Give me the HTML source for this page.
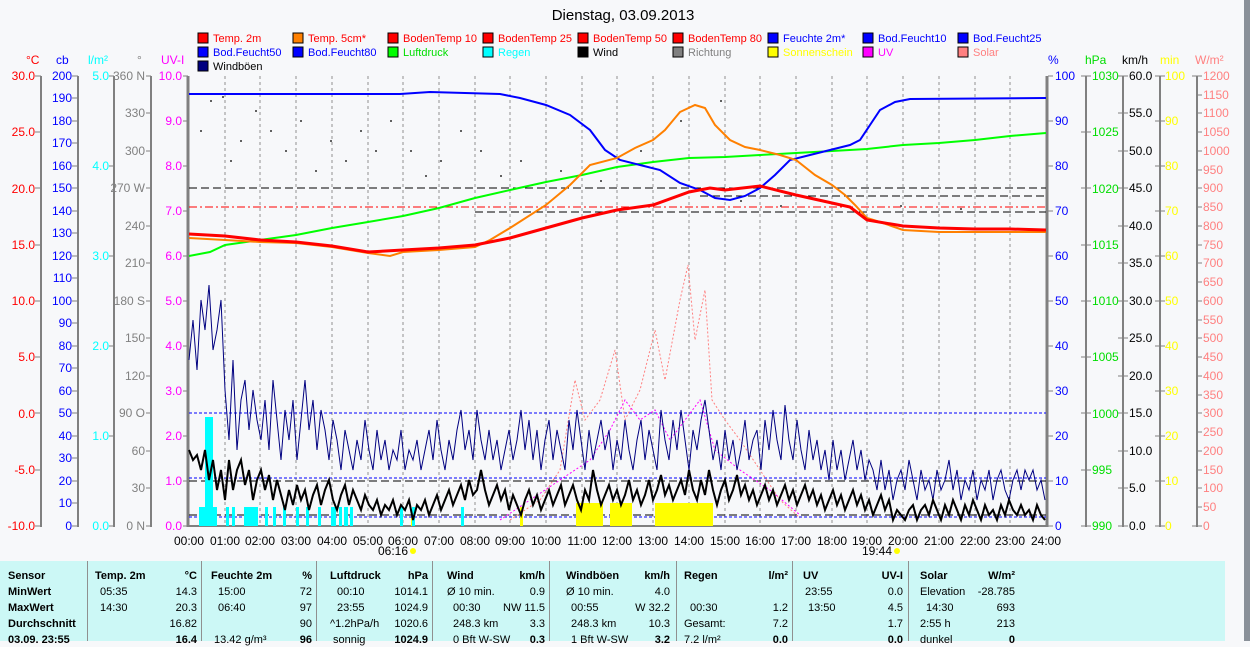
<!DOCTYPE html>
<html><head><meta charset="utf-8"><style>
body{margin:0;width:1250px;height:641px;overflow:hidden;background:#f7f8fa;font-family:"Liberation Sans",sans-serif;position:relative}
svg{position:absolute;left:0;top:0}
svg text{font-family:"Liberation Sans",sans-serif;font-size:12px}
svg g.lg text{font-size:11px}
#tbl{position:absolute;left:0;top:561px;width:1225px;height:80px;background:#ccf8f6;font-size:11px}
#tbl div{position:absolute;white-space:nowrap;line-height:14px}
.r{text-align:right}
.b{font-weight:bold}
.sep{position:absolute;top:0;width:1px;height:80px;background:#909090}
</style></head><body>
<svg width="1250" height="561" viewBox="0 0 1250 561">
<text x="623" y="20" text-anchor="middle" style="font-size:15px" fill="#000">Dienstag, 03.09.2013</text>
<g class="lg">
<rect x="198" y="33" width="10" height="10" fill="#f00" stroke="#000"/><text x="213" y="42" fill="#f00">Temp. 2m</text>
<rect x="293" y="33" width="10" height="10" fill="#ff8000" stroke="#000"/><text x="308" y="42" fill="#f00">Temp. 5cm*</text>
<rect x="388" y="33" width="10" height="10" fill="#f00" stroke="#000"/><text x="403" y="42" fill="#f00">BodenTemp 10</text>
<rect x="483" y="33" width="10" height="10" fill="#f00" stroke="#000"/><text x="498" y="42" fill="#f00">BodenTemp 25</text>
<rect x="578" y="33" width="10" height="10" fill="#f00" stroke="#000"/><text x="593" y="42" fill="#f00">BodenTemp 50</text>
<rect x="673" y="33" width="10" height="10" fill="#f00" stroke="#000"/><text x="688" y="42" fill="#f00">BodenTemp 80</text>
<rect x="768" y="33" width="10" height="10" fill="#00f" stroke="#000"/><text x="783" y="42" fill="#00f">Feuchte 2m*</text>
<rect x="863" y="33" width="10" height="10" fill="#00f" stroke="#000"/><text x="878" y="42" fill="#00f">Bod.Feucht10</text>
<rect x="958" y="33" width="10" height="10" fill="#00f" stroke="#000"/><text x="973" y="42" fill="#00f">Bod.Feucht25</text>
<rect x="198" y="47" width="10" height="10" fill="#00f" stroke="#000"/><text x="213" y="56" fill="#00f">Bod.Feucht50</text>
<rect x="293" y="47" width="10" height="10" fill="#00f" stroke="#000"/><text x="308" y="56" fill="#00f">Bod.Feucht80</text>
<rect x="388" y="47" width="10" height="10" fill="#0f0" stroke="#000"/><text x="403" y="56" fill="#0d0">Luftdruck</text>
<rect x="483" y="47" width="10" height="10" fill="#0ff" stroke="#000"/><text x="498" y="56" fill="#0ff">Regen</text>
<rect x="578" y="47" width="10" height="10" fill="#000" stroke="#000"/><text x="593" y="56" fill="#000">Wind</text>
<rect x="673" y="47" width="10" height="10" fill="#808080" stroke="#000"/><text x="688" y="56" fill="#808080">Richtung</text>
<rect x="768" y="47" width="10" height="10" fill="#ff0" stroke="#000"/><text x="783" y="56" fill="#ff0">Sonnenschein</text>
<rect x="863" y="47" width="10" height="10" fill="#f0f" stroke="#000"/><text x="878" y="56" fill="#f0f">UV</text>
<rect x="958" y="47" width="10" height="10" fill="#ff8080" stroke="#000"/><text x="973" y="56" fill="#ff8080">Solar</text>
<rect x="198" y="61" width="10" height="10" fill="#000080" stroke="#000"/><text x="213" y="70" fill="#000">Windböen</text>
</g>
<text x="26" y="64" fill="#f00">°C</text><text x="56" y="64" fill="#00f">cb</text><text x="88" y="64" fill="#0ff">l/m²</text><text x="137" y="64" fill="#808080">°</text><text x="161" y="64" fill="#f0f">UV-I</text>
<text x="1048" y="64" fill="#00f">%</text><text x="1085" y="64" fill="#0d0">hPa</text><text x="1122" y="64" fill="#000">km/h</text><text x="1160" y="64" fill="#ff0">min</text><text x="1195" y="64" fill="#ff8080">W/m²</text>
<g stroke="#808080" stroke-width="2"><line x1="41" y1="76" x2="41" y2="527"/><line x1="78" y1="76" x2="78" y2="527"/><line x1="114" y1="76" x2="114" y2="527"/><line x1="151" y1="76" x2="151" y2="527"/><line x1="1086" y1="76" x2="1086" y2="527"/><line x1="1123" y1="76" x2="1123" y2="527"/><line x1="1160" y1="76" x2="1160" y2="527"/><line x1="1197" y1="76" x2="1197" y2="527"/>
<line x1="188" y1="76" x2="188" y2="527" stroke-width="3"/><line x1="1047" y1="76" x2="1047" y2="527" stroke-width="3"/><line x1="187" y1="526" x2="1048" y2="526"/></g>
<rect x="1244" y="0" width="6" height="561" fill="#8a9199"/>
<g text-anchor="end" fill="#f00">
<text x="35" y="80">30.0</text><text x="35" y="136">25.0</text><text x="35" y="193">20.0</text><text x="35" y="249">15.0</text><text x="35" y="305">10.0</text><text x="35" y="361">5.0</text><text x="35" y="418">0.0</text><text x="35" y="474">-5.0</text><text x="35" y="530">-10.0</text></g>
<g stroke="#808080"><path d="M35 76h6M35 132h6M35 188h6M35 245h6M35 301h6M35 357h6M35 413h6M35 470h6M35 526h6"/>
<path d="M72 76h6M72 98h6M72 121h6M72 143h6M72 166h6M72 188h6M72 211h6M72 233h6M72 256h6M72 278h6M72 301h6M72 323h6M72 346h6M72 368h6M72 391h6M72 413h6M72 436h6M72 458h6M72 481h6M72 503h6M72 526h6"/>
<path d="M109 76h5M109 166h5M109 256h5M109 346h5M109 436h5M109 526h5"/>
<path d="M146 76h5M146 113h5M146 151h5M146 188h5M146 226h5M146 263h5M146 301h5M146 338h5M146 376h5M146 413h5M146 451h5M146 488h5M146 526h5"/>
<path d="M183 76h5M183 121h5M183 166h5M183 211h5M183 256h5M183 301h5M183 346h5M183 391h5M183 436h5M183 481h5M183 526h5"/>
<path d="M1048 76h5M1048 121h5M1048 166h5M1048 211h5M1048 256h5M1048 301h5M1048 346h5M1048 391h5M1048 436h5M1048 481h5M1048 526h5"/>
<path d="M1081 76h10M1081 132h10M1081 188h10M1081 245h10M1081 301h10M1081 357h10M1081 413h10M1081 470h10M1081 526h10"/>
<path d="M1118 76h10M1118 113h10M1118 151h10M1118 188h10M1118 226h10M1118 263h10M1118 301h10M1118 338h10M1118 376h10M1118 413h10M1118 451h10M1118 488h10M1118 526h10"/>
<path d="M1155 76h10M1155 121h10M1155 166h10M1155 211h10M1155 256h10M1155 301h10M1155 346h10M1155 391h10M1155 436h10M1155 481h10M1155 526h10"/>
<path d="M1192 76h10M1197 95h5M1197 113h5M1197 132h5M1197 151h5M1197 170h5M1197 188h5M1197 207h5M1197 226h5M1197 245h5M1197 263h5M1197 282h5M1197 301h5M1197 320h5M1197 338h5M1197 357h5M1197 376h5M1197 395h5M1197 413h5M1197 432h5M1197 451h5M1197 470h5M1197 488h5M1197 507h5M1192 526h10"/></g>
<g text-anchor="end" fill="#00f">
<text x="72" y="80">200</text><text x="72" y="102">190</text><text x="72" y="125">180</text><text x="72" y="147">170</text><text x="72" y="170">160</text><text x="72" y="192">150</text><text x="72" y="215">140</text><text x="72" y="237">130</text><text x="72" y="260">120</text><text x="72" y="282">110</text><text x="72" y="305">100</text><text x="72" y="327">90</text><text x="72" y="350">80</text><text x="72" y="372">70</text><text x="72" y="395">60</text><text x="72" y="417">50</text><text x="72" y="440">40</text><text x="72" y="462">30</text><text x="72" y="485">20</text><text x="72" y="507">10</text><text x="72" y="530">0</text></g>
<g text-anchor="end" fill="#0ff"><text x="109" y="80">5.0</text><text x="109" y="170">4.0</text><text x="109" y="260">3.0</text><text x="109" y="350">2.0</text><text x="109" y="440">1.0</text><text x="109" y="530">0.0</text></g>
<g text-anchor="end" fill="#808080"><text x="145" y="80">360 N</text><text x="145" y="117">330</text><text x="145" y="155">300</text><text x="145" y="192">270 W</text><text x="145" y="230">240</text><text x="145" y="267">210</text><text x="145" y="305">180 S</text><text x="145" y="342">150</text><text x="145" y="380">120</text><text x="145" y="417">90 O</text><text x="145" y="455">60</text><text x="145" y="492">30</text><text x="145" y="530">0 N</text></g>
<g text-anchor="end" fill="#f0f"><text x="182" y="80">10.0</text><text x="182" y="125">9.0</text><text x="182" y="170">8.0</text><text x="182" y="215">7.0</text><text x="182" y="260">6.0</text><text x="182" y="305">5.0</text><text x="182" y="350">4.0</text><text x="182" y="395">3.0</text><text x="182" y="440">2.0</text><text x="182" y="485">1.0</text><text x="182" y="530">0.0</text></g>
<g fill="#00f"><text x="1055" y="80">100</text><text x="1055" y="125">90</text><text x="1055" y="170">80</text><text x="1055" y="215">70</text><text x="1055" y="260">60</text><text x="1055" y="305">50</text><text x="1055" y="350">40</text><text x="1055" y="395">30</text><text x="1055" y="440">20</text><text x="1055" y="485">10</text><text x="1055" y="530">0</text></g>
<g fill="#0d0"><text x="1092" y="80">1030</text><text x="1092" y="136">1025</text><text x="1092" y="193">1020</text><text x="1092" y="249">1015</text><text x="1092" y="305">1010</text><text x="1092" y="361">1005</text><text x="1092" y="418">1000</text><text x="1092" y="474">995</text><text x="1092" y="530">990</text></g>
<g fill="#000"><text x="1129" y="80">60.0</text><text x="1129" y="117">55.0</text><text x="1129" y="155">50.0</text><text x="1129" y="192">45.0</text><text x="1129" y="230">40.0</text><text x="1129" y="267">35.0</text><text x="1129" y="305">30.0</text><text x="1129" y="342">25.0</text><text x="1129" y="380">20.0</text><text x="1129" y="417">15.0</text><text x="1129" y="455">10.0</text><text x="1129" y="492">5.0</text><text x="1129" y="530">0.0</text></g>
<g fill="#ff0"><text x="1165" y="80">100</text><text x="1165" y="125">90</text><text x="1165" y="170">80</text><text x="1165" y="215">70</text><text x="1165" y="260">60</text><text x="1165" y="305">50</text><text x="1165" y="350">40</text><text x="1165" y="395">30</text><text x="1165" y="440">20</text><text x="1165" y="485">10</text><text x="1165" y="530">0</text></g>
<g fill="#ff8080"><text x="1203" y="80">1200</text><text x="1203" y="99">1150</text><text x="1203" y="117">1100</text><text x="1203" y="136">1050</text><text x="1203" y="155">1000</text><text x="1203" y="174">950</text><text x="1203" y="192">900</text><text x="1203" y="211">850</text><text x="1203" y="230">800</text><text x="1203" y="249">750</text><text x="1203" y="267">700</text><text x="1203" y="286">650</text><text x="1203" y="305">600</text><text x="1203" y="324">550</text><text x="1203" y="342">500</text><text x="1203" y="361">450</text><text x="1203" y="380">400</text><text x="1203" y="399">350</text><text x="1203" y="417">300</text><text x="1203" y="436">250</text><text x="1203" y="455">200</text><text x="1203" y="474">150</text><text x="1203" y="492">100</text><text x="1203" y="511">50</text><text x="1203" y="530">0</text></g>
<g stroke="#909090" stroke-dasharray="3,3"><path d="M225 76V526M260 76V526M296 76V526M332 76V526M368 76V526M403 76V526M439 76V526M475 76V526M510 76V526M546 76V526M582 76V526M617 76V526M653 76V526M689 76V526M725 76V526M760 76V526M796 76V526M832 76V526M867 76V526M903 76V526M939 76V526M975 76V526M1010 76V526"/></g>
<g text-anchor="middle" fill="#000"><text x="189" y="545">00:00</text><text x="225" y="545">01:00</text><text x="260" y="545">02:00</text><text x="296" y="545">03:00</text><text x="332" y="545">04:00</text><text x="368" y="545">05:00</text><text x="403" y="545">06:00</text><text x="439" y="545">07:00</text><text x="475" y="545">08:00</text><text x="510" y="545">09:00</text><text x="546" y="545">10:00</text><text x="582" y="545">11:00</text><text x="617" y="545">12:00</text><text x="653" y="545">13:00</text><text x="689" y="545">14:00</text><text x="725" y="545">15:00</text><text x="760" y="545">16:00</text><text x="796" y="545">17:00</text><text x="832" y="545">18:00</text><text x="867" y="545">19:00</text><text x="903" y="545">20:00</text><text x="939" y="545">21:00</text><text x="975" y="545">22:00</text><text x="1010" y="545">23:00</text><text x="1046" y="545">24:00</text>
<text x="393" y="555">06:16</text><text x="877" y="555">19:44</text></g>
<circle cx="413" cy="551" r="3" fill="#ff0"/><circle cx="897" cy="551" r="3" fill="#ff0"/>
<line x1="412" y1="516" x2="412" y2="526" stroke="#ff0" stroke-width="2"/>
<line x1="189" y1="207" x2="1046" y2="207" stroke="#f00" stroke-dasharray="8,3,2,3"/>
<g stroke="#000" stroke-dasharray="8,4"><line x1="189" y1="188" x2="1046" y2="188"/><line x1="475" y1="212" x2="1046" y2="212"/><line x1="700" y1="196" x2="1046" y2="196"/><line x1="189" y1="481" x2="1046" y2="481"/><line x1="189" y1="515" x2="1046" y2="515"/></g>
<g stroke="#00f" stroke-dasharray="3,2"><line x1="189" y1="413" x2="1046" y2="413"/><line x1="189" y1="478" x2="1046" y2="478"/><line x1="189" y1="517" x2="1046" y2="517"/></g>
<g fill="#606060"><rect x="200" y="130" width="2" height="2"/><rect x="210" y="100" width="2" height="2"/><rect x="222" y="96" width="2" height="2"/><rect x="230" y="160" width="2" height="2"/><rect x="240" y="140" width="2" height="2"/><rect x="255" y="110" width="2" height="2"/><rect x="270" y="130" width="2" height="2"/><rect x="285" y="150" width="2" height="2"/><rect x="300" y="120" width="2" height="2"/><rect x="315" y="170" width="2" height="2"/><rect x="330" y="140" width="2" height="2"/><rect x="345" y="160" width="2" height="2"/><rect x="360" y="130" width="2" height="2"/><rect x="375" y="150" width="2" height="2"/><rect x="390" y="120" width="2" height="2"/><rect x="410" y="150" width="2" height="2"/><rect x="425" y="175" width="2" height="2"/><rect x="440" y="160" width="2" height="2"/><rect x="460" y="130" width="2" height="2"/><rect x="480" y="150" width="2" height="2"/><rect x="500" y="175" width="2" height="2"/><rect x="520" y="160" width="2" height="2"/><rect x="560" y="170" width="2" height="2"/><rect x="600" y="180" width="2" height="2"/><rect x="640" y="150" width="2" height="2"/><rect x="680" y="120" width="2" height="2"/><rect x="720" y="100" width="2" height="2"/><rect x="740" y="200" width="2" height="2"/><rect x="780" y="205" width="2" height="2"/><rect x="820" y="200" width="2" height="2"/><rect x="900" y="205" width="2" height="2"/><rect x="960" y="208" width="2" height="2"/></g>
<g fill="#0ff"><rect x="199" y="507" width="18" height="19"/><rect x="205" y="417" width="8" height="109"/><rect x="226" y="507" width="3" height="19"/><rect x="232" y="507" width="3" height="19"/><rect x="244" y="507" width="14" height="19"/><rect x="265" y="507" width="3" height="19"/><rect x="273" y="507" width="3" height="19"/><rect x="283" y="507" width="3" height="19"/><rect x="296" y="507" width="3" height="19"/><rect x="306" y="507" width="3" height="19"/><rect x="318" y="507" width="3" height="19"/><rect x="331" y="507" width="5" height="19"/><rect x="339" y="507" width="3" height="19"/><rect x="344" y="507" width="4" height="19"/><rect x="350" y="507" width="3" height="19"/><rect x="400" y="507" width="3" height="19"/><rect x="412" y="507" width="3" height="19"/><rect x="461" y="507" width="3" height="19"/></g>
<g fill="#ff0"><rect x="520" y="507" width="3" height="19"/><rect x="576" y="503" width="27" height="23"/><rect x="610" y="503" width="22" height="23"/><rect x="655" y="503" width="58" height="23"/></g>
<polyline fill="none" stroke="#ff8080" stroke-dasharray="2,2" points="510,520 540,500 560,470 575,380 585,420 600,400 615,350 625,420 640,390 655,330 665,380 680,300 688,265 695,340 705,290 712,400 725,420 740,440 760,470 780,500 800,518"/>
<polyline fill="none" stroke="#f0f" stroke-dasharray="2,2" points="500,520 530,500 560,480 590,460 610,430 625,400 640,420 655,410 670,440 685,420 700,400 715,450 740,470 770,490 800,515"/>
<polyline fill="none" stroke="#000080" stroke-width="1" points="189,360 193,320 197,370 201,300 205,330 209,285 213,350 217,330 221,300 225,390 229,440 233,360 237,450 241,400 245,380 249,430 253,390 257,420 261,440 265,400 269,450 273,380 277,420 281,460 285,410 289,440 293,400 297,460 301,420 305,380 309,430 313,400 317,450 321,410 325,430 329,460 333,420 337,440 341,470 345,430 349,450 353,470 357,440 361,460 365,420 369,450 373,470 377,430 381,460 385,440 389,470 393,450 397,460 401,430 405,470 409,450 413,460 417,440 421,470 425,450 429,430 433,460 437,420 441,450 445,470 449,440 453,460 457,430 461,410 465,450 469,430 473,460 477,410 481,440 485,460 489,430 493,460 497,440 501,470 505,450 509,430 513,460 517,440 521,410 525,450 529,420 533,460 537,430 541,470 545,440 549,420 553,460 557,430 561,450 565,470 569,420 573,450 577,410 581,440 585,470 589,430 593,460 597,440 601,420 605,450 609,430 613,470 617,440 621,460 625,420 629,450 633,470 637,440 641,420 645,460 649,430 653,450 657,470 661,410 665,440 669,460 673,420 677,450 681,410 685,440 689,470 693,430 697,450 701,420 705,400 709,430 713,460 717,440 721,470 725,430 729,460 733,440 737,470 741,450 745,420 749,460 753,440 757,430 761,470 765,420 769,450 773,410 777,440 781,460 785,405 789,440 793,460 797,420 801,450 805,470 809,430 813,460 817,440 821,470 825,450 829,480 833,440 837,470 841,450 845,480 849,460 853,440 857,470 861,450 865,480 869,460 873,470 877,490 881,460 885,490 889,470 893,500 897,480 901,470 905,490 909,460 913,480 917,500 921,470 925,490 929,480 933,500 937,470 941,490 945,480 949,460 953,490 957,470 961,500 965,480 969,490 973,470 977,500 981,480 985,490 989,470 993,500 997,480 1001,470 1005,490 1009,500 1013,480 1017,470 1021,490 1025,470 1029,480 1033,470 1037,490 1041,480 1045,500"/>
<polyline fill="none" stroke="#000" stroke-width="2" points="189,450 193,460 197,455 201,470 205,450 209,480 213,460 217,490 221,470 225,500 229,460 233,490 237,470 241,460 245,485 249,470 253,500 257,480 261,470 265,490 269,475 273,500 277,480 281,495 285,510 289,490 293,505 297,485 301,500 305,490 309,510 313,495 317,485 321,505 325,490 329,480 333,500 337,510 341,495 345,485 349,505 353,490 357,500 361,510 365,495 369,505 373,510 377,500 381,515 385,505 389,510 393,500 397,515 401,505 405,510 409,500 413,520 417,505 421,510 425,500 429,515 433,505 437,495 441,510 445,500 449,490 453,505 457,495 461,485 465,500 469,480 473,495 477,490 481,470 485,490 489,505 493,495 497,485 501,500 505,490 509,510 513,495 517,505 521,515 525,500 529,490 533,505 537,495 541,510 545,500 549,490 553,505 557,495 561,485 565,505 569,495 573,485 577,500 581,510 585,490 589,500 593,470 597,490 601,505 605,495 609,485 613,500 617,490 621,505 625,495 629,480 633,500 637,490 641,505 645,495 649,480 653,500 657,490 661,475 665,495 669,485 673,500 677,490 681,480 685,495 689,470 693,490 697,500 701,480 705,495 709,470 713,490 717,505 721,490 725,480 729,500 733,490 737,475 741,495 745,485 749,500 753,490 757,505 761,495 765,485 769,500 773,490 777,505 781,495 785,485 789,500 793,490 797,505 801,495 805,485 809,500 813,490 817,505 821,495 825,510 829,500 833,490 837,505 841,495 845,510 849,500 853,490 857,505 861,495 865,510 869,500 873,515 877,505 881,495 885,510 889,500 893,520 897,510 901,515 905,520 909,510 913,505 917,520 921,510 925,505 929,515 933,500 937,510 941,520 945,505 949,515 953,500 957,510 961,520 965,505 969,515 973,500 977,510 981,520 985,505 989,515 993,510 997,520 1001,505 1005,515 1009,500 1013,510 1017,515 1021,505 1025,515 1029,510 1033,520 1037,505 1041,515 1045,520"/>
<polyline fill="none" stroke="#0f0" stroke-width="2" points="189,256 210,252 225,245 260,240 296,235 332,228 368,222 403,216 439,208 475,198 510,190 546,182 582,175 617,167 653,162 689,158 725,157 760,155 796,153 832,151 867,149 903,145 939,143 975,140 1010,136 1046,133"/>
<polyline fill="none" stroke="#00f" stroke-width="2" points="189,94 400,94 430,92 500,94 520,98 546,105 570,115 590,130 605,150 620,160 640,165 660,170 680,183 700,190 715,198 730,200 745,196 760,188 775,175 790,160 810,155 830,150 850,145 860,140 870,125 880,110 895,102 910,99 1046,98"/>
<polyline fill="none" stroke="#ff8000" stroke-width="2" points="189,238 225,240 260,242 296,243 332,247 368,253 390,256 403,252 439,250 475,247 490,240 510,228 546,205 570,185 590,165 617,158 635,148 653,140 665,130 680,112 695,105 705,108 715,125 730,140 745,147 760,150 780,155 796,160 815,175 832,185 845,195 855,205 867,218 880,222 903,230 939,232 1046,232"/>
<polyline fill="none" stroke="#f00" stroke-width="3" points="189,234 225,236 260,240 296,242 332,246 368,252 403,250 439,248 475,245 510,238 546,228 582,218 617,210 653,205 689,192 710,188 725,190 760,186 796,195 832,203 850,207 867,220 903,226 939,228 975,229 1010,229 1046,230"/>
</svg>
<div id="tbl">
<span class="sep" style="left:87px"></span><span class="sep" style="left:201px"></span><span class="sep" style="left:316px"></span><span class="sep" style="left:432px"></span><span class="sep" style="left:549px"></span><span class="sep" style="left:676px"></span><span class="sep" style="left:792px"></span><span class="sep" style="left:908px"></span>
<div class="b" style="left:8px;top:8px">Sensor</div><div class="b" style="left:8px;top:24px">MinWert</div><div class="b" style="left:8px;top:40px">MaxWert</div><div class="b" style="left:8px;top:56px">Durchschnitt</div><div class="b" style="left:8px;top:72px">03.09. 23:55</div>
<div class="b" style="left:95px;top:8px">Temp. 2m</div><div class="b r" style="left:150px;width:47px;top:8px">°C</div>
<div style="left:100px;top:24px">05:35</div><div class="r" style="left:150px;width:47px;top:24px">14.3</div>
<div style="left:100px;top:40px">14:30</div><div class="r" style="left:150px;width:47px;top:40px">20.3</div>
<div class="r" style="left:150px;width:47px;top:56px">16.82</div><div class="b r" style="left:150px;width:47px;top:72px">16.4</div>
<div class="b" style="left:211px;top:8px">Feuchte 2m</div><div class="b r" style="left:270px;width:42px;top:8px">%</div>
<div style="left:218px;top:24px">15:00</div><div class="r" style="left:270px;width:42px;top:24px">72</div>
<div style="left:218px;top:40px">06:40</div><div class="r" style="left:270px;width:42px;top:40px">97</div>
<div class="r" style="left:270px;width:42px;top:56px">90</div><div style="left:214px;top:72px">13.42 g/m³</div><div class="b r" style="left:270px;width:42px;top:72px">96</div>
<div class="b" style="left:330px;top:8px">Luftdruck</div><div class="b r" style="left:380px;width:48px;top:8px">hPa</div>
<div style="left:337px;top:24px">00:10</div><div class="r" style="left:370px;width:58px;top:24px">1014.1</div>
<div style="left:337px;top:40px">23:55</div><div class="r" style="left:370px;width:58px;top:40px">1024.9</div>
<div style="left:330px;top:56px">^1.2hPa/h</div><div class="r" style="left:370px;width:58px;top:56px">1020.6</div>
<div style="left:333px;top:72px">sonnig</div><div class="b r" style="left:370px;width:58px;top:72px">1024.9</div>
<div class="b" style="left:447px;top:8px">Wind</div><div class="b r" style="left:490px;width:55px;top:8px">km/h</div>
<div style="left:447px;top:24px">Ø 10 min.</div><div class="r" style="left:490px;width:55px;top:24px">0.9</div>
<div style="left:453px;top:40px">00:30</div><div class="r" style="left:490px;width:55px;top:40px">NW 11.5</div>
<div style="left:453px;top:56px">248.3 km</div><div class="r" style="left:490px;width:55px;top:56px">3.3</div>
<div style="left:453px;top:72px">0 Bft W-SW</div><div class="b r" style="left:510px;width:35px;top:72px">0.3</div>
<div class="b" style="left:566px;top:8px">Windböen</div><div class="b r" style="left:620px;width:50px;top:8px">km/h</div>
<div style="left:566px;top:24px">Ø 10 min.</div><div class="r" style="left:620px;width:50px;top:24px">4.0</div>
<div style="left:571px;top:40px">00:55</div><div class="r" style="left:620px;width:50px;top:40px">W 32.2</div>
<div style="left:571px;top:56px">248.3 km</div><div class="r" style="left:620px;width:50px;top:56px">10.3</div>
<div style="left:571px;top:72px">1 Bft W-SW</div><div class="b r" style="left:640px;width:30px;top:72px">3.2</div>
<div class="b" style="left:684px;top:8px">Regen</div><div class="b r" style="left:740px;width:48px;top:8px">l/m²</div>
<div style="left:690px;top:40px">00:30</div><div class="r" style="left:740px;width:48px;top:40px">1.2</div>
<div style="left:684px;top:56px">Gesamt:</div><div class="r" style="left:740px;width:48px;top:56px">7.2</div>
<div style="left:684px;top:72px">7.2 l/m²</div><div class="b r" style="left:740px;width:48px;top:72px">0.0</div>
<div class="b" style="left:803px;top:8px">UV</div><div class="b r" style="left:850px;width:53px;top:8px">UV-I</div>
<div style="left:805px;top:24px">23:55</div><div class="r" style="left:850px;width:53px;top:24px">0.0</div>
<div style="left:808px;top:40px">13:50</div><div class="r" style="left:850px;width:53px;top:40px">4.5</div>
<div class="r" style="left:850px;width:53px;top:56px">1.7</div><div class="b r" style="left:850px;width:53px;top:72px">0.0</div>
<div class="b" style="left:920px;top:8px">Solar</div><div class="b r" style="left:960px;width:55px;top:8px">W/m²</div>
<div style="left:920px;top:24px">Elevation</div><div class="r" style="left:960px;width:55px;top:24px">-28.785</div>
<div style="left:926px;top:40px">14:30</div><div class="r" style="left:960px;width:55px;top:40px">693</div>
<div style="left:920px;top:56px">2:55 h</div><div class="r" style="left:960px;width:55px;top:56px">213</div>
<div style="left:920px;top:72px">dunkel</div><div class="b r" style="left:960px;width:55px;top:72px">0</div>
</div>
<div style="position:absolute;left:1225px;top:561px;width:19px;height:80px;background:#f7f8fa"></div>
<div style="position:absolute;left:1244px;top:561px;width:6px;height:80px;background:#8a9199"></div>
</body></html>
